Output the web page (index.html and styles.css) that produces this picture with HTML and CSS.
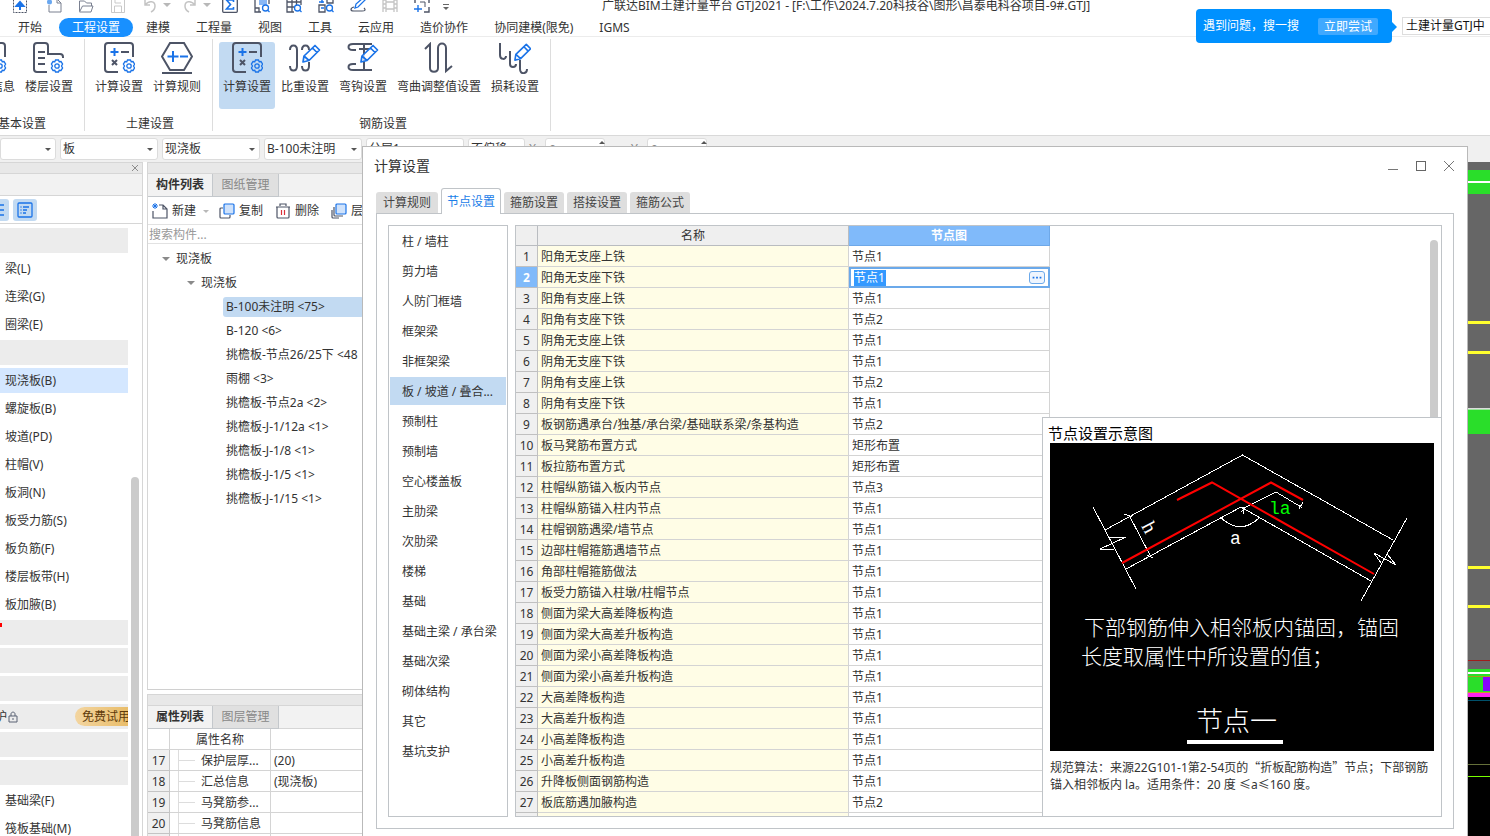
FILE: index.html
```html
<!DOCTYPE html>
<html lang="zh-CN">
<head>
<meta charset="utf-8">
<title>广联达BIM土建计量平台 GTJ2021</title>
<link rel="stylesheet" href="styles.css">
</head>
<body>
<svg class="defs" width="0" height="0" aria-hidden="true">
  <symbol id="gear" viewBox="0 0 14 14"><path d="M5.5 1h3l.7 1.7 1.8-.2 1.6 2.6L11.500 7l1.100 1.900L11 11.500l-1.800-.2L8.500 13h-3l-.7-1.700-1.800.2L1.400 8.900 2.500 7 1.400 5.100 3 2.500l1.800.2z"/><circle cx="7" cy="7" r="2.200"/></symbol>
  <symbol id="calc" viewBox="0 0 32 32"><g fill="none" stroke="#4d5466" stroke-width="2"><path d="M15 30H5a3 3 0 0 1-3-3V4a3 3 0 0 1 3-3h22a3 3 0 0 1 3 3v11"/><path d="M18 10h8M9 18l5 5M14 18l-5 5"/></g><path d="M11.500 6v8M7.500 10h8" stroke="#1a73e8" stroke-width="2"/><use href="#gear" x="19" y="17" width="14" height="14" fill="none" stroke="#1a73e8" stroke-width="1.300"/></symbol>
  <symbol id="pencil" viewBox="0 0 20 20"><path d="M2 18l1-6L14 1.500 18.500 6 8 16.500zM3 12l5 4.500M11.500 4l4.500 4.500" fill="#fff" fill-opacity=".8" stroke="#1a73e8" stroke-width="1.700" stroke-linejoin="round"/></symbol>
</svg>

<header class="titlebar">
  <nav class="quick" aria-label="快速访问">
    <button class="q q-first" aria-label="上传"><svg viewBox="0 0 16 16"><rect x="1.500" y="1.500" width="13" height="14" fill="none" stroke="#4d5466" stroke-dasharray="2 1"/><path d="M8 13V6M4.500 9L8 5l3.500 4z" fill="#1a73e8" stroke="#1a73e8" stroke-width="2"/></svg></button>
    <button class="q" aria-label="新建工程"><svg viewBox="0 0 16 16"><path d="M8 2h3l4 4v9H3V8" fill="none" stroke="#7a8090"/><path d="M11 2v4h4" fill="none" stroke="#7a8090"/><circle cx="3.500" cy="5" r="2.500" fill="#69a7f0"/></svg></button>
    <button class="q" aria-label="打开"><svg viewBox="0 0 16 16"><path d="M1.500 14V4h5l2 2h5v3M1.500 15l3-6H15l-2 6z" fill="none" stroke="#7a8090"/></svg></button>
    <button class="q" aria-label="保存"><svg viewBox="0 0 16 16"><path d="M1.500 2.500h13v13h-13zM4.500 15V9h7v6M5 2v4h6" fill="none" stroke="#c9c9c9"/></svg></button>
    <button class="q" aria-label="撤销"><svg viewBox="0 0 16 16"><path d="M3 3v5h5M3 8c4-5 10-4 10 1 0 3-2 5-4 6" fill="none" stroke="#c4c4c4" stroke-width="1.500"/></svg><i class="caret pale"></i></button>
    <button class="q" aria-label="恢复"><svg viewBox="0 0 16 16"><path d="M13 3v5H8M13 8C9 3 3 4 3 9c0 3 2 5 4 6" fill="none" stroke="#c4c4c4" stroke-width="1.500"/></svg><i class="caret pale"></i></button>
    <button class="q" aria-label="汇总"><svg viewBox="0 0 16 16"><rect x=".7" y="0" width="14.600" height="15.300" rx="1" fill="none" stroke="#4d5466" stroke-width="1.300"/><path d="M11.500 5V3h-7l4 4.500-4 4.500h7v-2" fill="none" stroke="#1a73e8" stroke-width="1.600"/></svg></button>
    <button class="q" aria-label="查看"><svg viewBox="0 0 16 16"><path d="M1 0v15h6M15 0v7M1 11h4v4" fill="none" stroke="#4d5466" stroke-width="1.300"/><path d="M5 3h8v5H5z" fill="#8ab8f5"/><circle cx="11.500" cy="11" r="3" fill="none" stroke="#1a73e8" stroke-width="1.300"/><path d="M13.500 13l2 2" stroke="#1a73e8" stroke-width="1.300"/></svg></button>
    <button class="q" aria-label="报表"><svg viewBox="0 0 16 16"><path d="M1 0v15h7M15 0v8M6 0v15M10.500 0v8M1 5h14M1 10h7" fill="none" stroke="#4d5466" stroke-width="1.300"/><circle cx="11.500" cy="11" r="3" fill="none" stroke="#1a73e8" stroke-width="1.300"/><path d="M13.500 13l2 2" stroke="#1a73e8" stroke-width="1.300"/></svg></button>
    <button class="q" aria-label="查找"><svg viewBox="0 0 16 16"><path d="M1 8h6v7H1zM9 1h6v5H9z" fill="none" stroke="#4d5466" stroke-width="1.300"/><path d="M1 5h5M4 2v4M3 11h3" stroke="#1a73e8" stroke-width="1.500"/><circle cx="11.500" cy="11" r="3" fill="none" stroke="#1a73e8" stroke-width="1.300"/><path d="M13.500 13l2 2" stroke="#1a73e8" stroke-width="1.300"/></svg></button>
    <button class="q" aria-label="编辑"><svg viewBox="0 0 16 16"><path d="M5 11l1-4 7-6 2 2-7 7z" fill="none" stroke="#1a73e8" stroke-width="1.300"/><path d="M4 10c-4 1-4 4 0 4h8c3 0 4-1 2-3" fill="none" stroke="#4d5466" stroke-width="1.200"/></svg></button>
    <button class="q" aria-label="视频"><svg viewBox="0 0 16 16"><path d="M1 0v15M4 0v15M12 0v15M15 0v15M1 3h3M1 7h3M1 11h3M12 3h3M12 7h3M12 11h3M4 5h8M4 12h8" fill="none" stroke="#c4c4c4" stroke-width="1.300"/></svg></button>
    <button class="q" aria-label="框选"><svg viewBox="0 0 16 16"><path d="M1 6V2h4M11 2h4v4M15 10v5h-5" fill="none" stroke="#4d5466" stroke-width="1.400"/><path d="M4 8v7M0 12h8" stroke="#1a73e8" stroke-width="1.400"/><path d="M6 5h5v5" fill="none" stroke="#4d5466"/></svg></button>
    <button class="q q-more" aria-label="更多"><svg viewBox="0 0 6 16"><path d="M0 7.500h6" stroke="#666"/><path d="M0 10h6l-3 3z" fill="#666"/></svg></button>
  </nav>
  <h1 class="app-title">广联达BIM土建计量平台 GTJ2021 - [F:\工作\2024.7.20科技谷\图形\昌泰电科谷项目-9#.GTJ]</h1>
</header>

<nav class="tabs" aria-label="功能区">
  <button class="tab tab-first">开始</button><button class="tab tab-on">工程设置</button><button class="tab">建模</button><button class="tab">工程量</button><button class="tab">视图</button><button class="tab">工具</button><button class="tab">云应用</button><button class="tab">造价协作</button><button class="tab">协同建模(限免)</button><button class="tab">IGMS</button>
</nav>

<div class="help">
  <div class="tip"><span>遇到问题，搜一搜</span><button>立即尝试</button></div>
  <input class="ask" aria-label="搜索帮助" value="土建计量GTJ中">
</div>

<section class="ribbon">
  <div class="group group-cut">
    <div class="cmds">
      <button class="cmd"><svg viewBox="0 0 32 32"><path d="M15 30H5V1h22a3 3 0 0 1 3 3v11" fill="none" stroke="#4d5466" stroke-width="2"/><use href="#gear" x="18" y="17" width="14" height="14" fill="none" stroke="#1a73e8" stroke-width="1.300"/></svg>工程信息</button>
      <button class="cmd"><svg viewBox="0 0 32 32"><g fill="none" stroke="#4d5466" stroke-width="2"><path d="M14 30H4a3 3 0 0 1-3-3V4a3 3 0 0 1 3-3h8a3 3 0 0 1 3 3v8h12a3 3 0 0 1 3 3v1M5 10h7M5 16h7M5 22h7"/></g><use href="#gear" x="17" y="17" width="14" height="14" fill="none" stroke="#1a73e8" stroke-width="1.300"/></svg>楼层设置</button>
    </div>
    <span class="caption">基本设置</span>
  </div>
  <div class="group">
    <div class="cmds">
      <button class="cmd"><svg><use href="#calc"/></svg>计算设置</button>
      <button class="cmd"><svg viewBox="0 0 32 32"><path d="M9 1h14l8 13.500L23 28H9L1 14.500zM1 31h30" fill="none" stroke="#4d5466" stroke-width="2"/><path d="M12 9v11M6.500 14.500h11" stroke="#1a73e8" stroke-width="2"/><path d="M19 14.500h8" stroke="#1a73e8" stroke-width="2"/></svg>计算规则</button>
    </div>
    <span class="caption">土建设置</span>
  </div>
  <div class="group">
    <div class="cmds">
      <button class="cmd cmd-on"><svg><use href="#calc"/></svg>计算设置</button>
      <button class="cmd"><svg viewBox="0 0 32 32"><path d="M1 8C1 2 8 2 8 8v16c0 6-7 6-7 0M13 8c0-6 7-6 7 0M20 20v4c0 6-7 6-7 0" fill="none" stroke="#4d5466" stroke-width="2"/><use href="#pencil" x="12" y="2" width="20" height="20"/></svg>比重设置</button>
      <button class="cmd"><svg viewBox="0 0 32 32"><path d="M25 2H6C0 2 0 8 6 8h3M12 2h13M25 28H6c-6 0-6-6 0-6h3M17 3v24M12 7h10" fill="none" stroke="#4d5466" stroke-width="2"/><use href="#pencil" x="12" y="2" width="20" height="20"/></svg>弯钩设置</button>
      <button class="cmd cmd-wide"><svg viewBox="0 0 32 32"><path d="M2 7l5-5v24c0 5 8 5 8 0V6c0-6 8-6 8 0v23l6-5" fill="none" stroke="#4d5466" stroke-width="2"/></svg>弯曲调整值设置</button>
      <button class="cmd"><svg viewBox="0 0 32 32"><path d="M1 1v12c0 5 6 5 6 1M11 9v13c0 4 6 4 6 0M21 18v9c0 6 7 5 7 0" fill="none" stroke="#4d5466" stroke-width="2"/><use href="#pencil" x="14" y="1" width="19" height="19"/></svg>损耗设置</button>
    </div>
    <span class="caption">钢筋设置</span>
  </div>
</section>

<section class="filters">
  <span class="pick pick-cut"><select aria-label="楼层"><option></option></select></span>
  <span class="pick"><select aria-label="构件大类"><option>板</option></select></span>
  <span class="pick"><select aria-label="构件类型"><option>现浇板</option></select></span>
  <span class="pick"><select aria-label="构件"><option>B-100未注明</option></select></span>
  <span class="pick"><select aria-label="分层"><option>分层1</option></select></span>
  <span class="pick pick-small"><select aria-label="偏移"><option>不偏移</option></select></span>
  <label class="spin">X:<input value="0"></label>
  <label class="spin">Y:<input value="0"></label>
</section>

<main class="work">
  <aside class="modules">
    <div class="grip"><button aria-label="关闭"><svg viewBox="0 0 8 8"><path d="M1 1l6 6M7 1L1 7" stroke="#8c8c8c"/></svg></button></div>
    <div class="blank"></div>
    <div class="views">
      <button class="view view-cut" aria-label="列表"><svg viewBox="0 0 16 16"><path d="M1 3h14M1 8h14M1 13h14" stroke="#1a73e8" stroke-width="1.300"/></svg></button>
      <button class="view" aria-label="分组"><svg viewBox="0 0 16 16"><path d="M2 1h12a1 1 0 0 1 1 1v12a1 1 0 0 1-1 1H2a1 1 0 0 1-1-1V2a1 1 0 0 1 1-1zM6 5h6M6 8h4M6 11h3M3.500 5h1M3.500 8h1M3.500 11h1" fill="none" stroke="#1a73e8" stroke-width="1.300"/></svg></button>
    </div>
    <div class="module-body">
      <ul class="module-list">
        <li class="fold"></li><li>梁(L)</li><li>连梁(G)</li><li>圈梁(E)</li><li class="fold"></li><li class="picked">现浇板(B)</li><li>螺旋板(B)</li><li>坡道(PD)</li><li>柱帽(V)</li><li>板洞(N)</li><li>板受力筋(S)</li><li>板负筋(F)</li><li>楼层板带(H)</li><li>板加腋(B)</li><li class="fold"><i class="dot"></i></li><li class="fold"></li><li class="fold"></li>
        <li class="fold trial"><span class="pit">护</span><svg viewBox="0 0 10 12"><path d="M1 5h8v6H1zM3 5V3c0-2.500 4-2.500 4 0v2M5 7v2" fill="none" stroke="#5b6375"/></svg><button>免费试用</button></li>
        <li class="fold"></li><li class="fold"></li><li>基础梁(F)</li><li>筏板基础(M)</li>
      </ul>
      <div class="thumb"></div>
    </div>
  </aside>

  <aside class="side">
    <section class="panel panel-tree">
      <div class="grip"></div>
      <div class="ptabs"><button class="on">构件列表</button><button>图纸管理</button></div>
      <div class="tools">
        <button><svg viewBox="0 0 16 16"><path d="M7 2h4l4 4v9H1V8M11 2v4h4" fill="none" stroke="#4d5466" stroke-width="1.200"/><path d="M1 1l4 4M5 1L1 5M3 0v6M0 3h6" stroke="#1a73e8"/></svg>新建<i class="caret pale"></i></button>
        <button><svg viewBox="0 0 16 16"><path d="M4 5H2a1 1 0 0 0-1 1v8a1 1 0 0 0 1 1h8a1 1 0 0 0 1-1v-2" fill="none" stroke="#4d5466" stroke-width="1.200"/><rect x="5" y="1" width="10" height="10" rx="1" fill="#cfe2fb" stroke="#1a73e8" stroke-width="1.200"/></svg>复制</button>
        <button><svg viewBox="0 0 16 16"><path d="M2 4v10a1 1 0 0 0 1 1h10a1 1 0 0 0 1-1V4M1 4h14M5 3V1h6v2" fill="none" stroke="#4d5466" stroke-width="1.200"/><path d="M6.500 7v5M9.500 7v5" stroke="#d9303a" stroke-width="1.200"/></svg>删除</button>
        <button><svg viewBox="0 0 16 16"><path d="M3 4v8a1 1 0 0 0 1 1h8M1 7v7a1 1 0 0 0 1 1h6" fill="none" stroke="#4d5466" stroke-width="1.200"/><rect x="5" y="1" width="10" height="10" rx="1" fill="#cfe2fb" stroke="#1a73e8" stroke-width="1.200"/></svg>层</button>
      </div>
      <input class="find" aria-label="搜索构件" placeholder="搜索构件...">
      <ul class="tree">
        <li class="lv1"><i class="caret"></i>现浇板</li>
        <li class="lv2"><i class="caret"></i>现浇板</li>
        <li><span class="picked">B-100未注明 &lt;75&gt;</span></li>
        <li><span>B-120 &lt;6&gt;</span></li>
        <li><span>挑檐板-节点26/25下 &lt;48</span></li>
        <li><span>雨棚 &lt;3&gt;</span></li>
        <li><span>挑檐板-节点2a &lt;2&gt;</span></li>
        <li><span>挑檐板-J-1/12a &lt;1&gt;</span></li>
        <li><span>挑檐板-J-1/8 &lt;1&gt;</span></li>
        <li><span>挑檐板-J-1/5 &lt;1&gt;</span></li>
        <li><span>挑檐板-J-1/15 &lt;1&gt;</span></li>
      </ul>
    </section>
    <section class="panel panel-props">
      <div class="grip"></div>
      <div class="ptabs"><button class="on">属性列表</button><button>图层管理</button></div>
      <table class="props">
        <tr><th></th><th>属性名称</th><th></th></tr>
        <tr><td>17</td><td>保护层厚...</td><td>(20)</td></tr>
        <tr><td>18</td><td>汇总信息</td><td>(现浇板)</td></tr>
        <tr><td>19</td><td>马凳筋参...</td><td></td></tr>
        <tr><td>20</td><td>马凳筋信息</td><td></td></tr>
        <tr><td></td><td></td><td></td></tr>
      </table>
    </section>
  </aside>

  <div class="canvas">
    <svg width="100%" height="100%" shape-rendering="crispEdges" aria-label="绘图区">
      <rect width="100%" height="100%" fill="#666"/>
      <rect y="8" width="100%" height="24" fill="#2ade2a"/><rect y="19" width="100%" height="2" fill="#fff"/>
      <g fill="#ffff2e"><rect y="159" width="100%" height="3"/><rect y="189" width="100%" height="3"/><rect y="404" width="100%" height="3"/><rect y="443" width="100%" height="3"/></g>
      <rect y="246" width="100%" height="1" fill="#ddd"/><rect y="248" width="100%" height="24" fill="#2ade2a"/><rect y="247" width="100%" height="1" fill="#9be69b"/>
      <rect y="498" width="100%" height="1" fill="#a11c1c"/>
      <rect y="507" width="100%" height="24" fill="#2ade2a"/><rect y="510" width="100%" height="2" fill="#fff"/>
      <rect y="514" width="100%" height="1" fill="#a89a1c"/><rect y="530" width="100%" height="1" fill="#c9a020"/>
      <svg x="100%" overflow="visible"><rect x="-7" y="515" width="7" height="14" fill="#8800ff"/></svg>
      <rect y="531" width="100%" height="4" fill="#ff22ee"/>
      <rect y="535" width="100%" height="100%" fill="#000"/>
      <rect y="538" width="100%" height="1" fill="#00506a"/><rect y="602" width="100%" height="1" fill="#66703a"/><rect y="614" width="100%" height="1" fill="#78ff00"/>
    </svg>
  </div>
</main>

<section class="dialog" role="dialog" aria-label="计算设置">
  <div class="dlg-head">
    <h2>计算设置</h2>
    <button aria-label="最小化"><svg viewBox="0 0 12 12"><path d="M1 9.500h10" stroke="#777"/></svg></button>
    <button aria-label="最大化"><svg viewBox="0 0 12 12"><rect x="1.500" y="1.500" width="9" height="9" fill="none" stroke="#666"/></svg></button>
    <button aria-label="关闭窗口"><svg viewBox="0 0 12 12"><path d="M1 1l10 10M11 1L1 11" stroke="#777"/></svg></button>
  </div>
  <div class="dlg-tabs"><button class="wide">计算规则</button><button class="on">节点设置</button><button>箍筋设置</button><button>搭接设置</button><button>箍筋公式</button></div>
  <div class="dlg-body">
    <ul class="kinds">
      <li>柱 / 墙柱</li><li>剪力墙</li><li>人防门框墙</li><li>框架梁</li><li>非框架梁</li><li class="picked">板 / 坡道 / 叠合...</li><li>预制柱</li><li>预制墙</li><li>空心楼盖板</li><li>主肋梁</li><li>次肋梁</li><li>楼梯</li><li>基础</li><li>基础主梁 / 承台梁</li><li>基础次梁</li><li>砌体结构</li><li>其它</li><li>基坑支护</li>
    </ul>
    <div class="sheet">
      <table class="nodes">
        <tr><th></th><th>名称</th><th class="on">节点图</th></tr>
        <tr><td>1</td><td>阳角无支座上铁</td><td>节点1</td></tr>
        <tr class="row-on"><td>2</td><td>阳角无支座下铁</td><td><div class="edit"><input aria-label="节点图" value="节点1"><button aria-label="选择节点"><svg viewBox="0 0 16 12"><path d="M3 6h2M7 6h2M11 6h2" stroke="#1a73e8" stroke-width="2"/></svg></button></div></td></tr>
        <tr><td>3</td><td>阳角有支座上铁</td><td>节点1</td></tr>
        <tr><td>4</td><td>阳角有支座下铁</td><td>节点2</td></tr>
        <tr><td>5</td><td>阴角无支座上铁</td><td>节点1</td></tr>
        <tr><td>6</td><td>阴角无支座下铁</td><td>节点1</td></tr>
        <tr><td>7</td><td>阴角有支座上铁</td><td>节点2</td></tr>
        <tr><td>8</td><td>阴角有支座下铁</td><td>节点1</td></tr>
        <tr><td>9</td><td>板钢筋遇承台/独基/承台梁/基础联系梁/条基构造</td><td>节点2</td></tr>
        <tr><td>10</td><td>板马凳筋布置方式</td><td>矩形布置</td></tr>
        <tr><td>11</td><td>板拉筋布置方式</td><td>矩形布置</td></tr>
        <tr><td>12</td><td>柱帽纵筋锚入板内节点</td><td>节点3</td></tr>
        <tr><td>13</td><td>柱帽纵筋锚入柱内节点</td><td>节点1</td></tr>
        <tr><td>14</td><td>柱帽钢筋遇梁/墙节点</td><td>节点1</td></tr>
        <tr><td>15</td><td>边部柱帽箍筋遇墙节点</td><td>节点1</td></tr>
        <tr><td>16</td><td>角部柱帽箍筋做法</td><td>节点1</td></tr>
        <tr><td>17</td><td>板受力筋锚入柱墩/柱帽节点</td><td>节点1</td></tr>
        <tr><td>18</td><td>侧面为梁大高差降板构造</td><td>节点1</td></tr>
        <tr><td>19</td><td>侧面为梁大高差升板构造</td><td>节点1</td></tr>
        <tr><td>20</td><td>侧面为梁小高差降板构造</td><td>节点1</td></tr>
        <tr><td>21</td><td>侧面为梁小高差升板构造</td><td>节点1</td></tr>
        <tr><td>22</td><td>大高差降板构造</td><td>节点1</td></tr>
        <tr><td>23</td><td>大高差升板构造</td><td>节点1</td></tr>
        <tr><td>24</td><td>小高差降板构造</td><td>节点1</td></tr>
        <tr><td>25</td><td>小高差升板构造</td><td>节点1</td></tr>
        <tr><td>26</td><td>升降板侧面钢筋构造</td><td>节点1</td></tr>
        <tr><td>27</td><td>板底筋遇加腋构造</td><td>节点2</td></tr>
        <tr><td></td><td></td><td></td></tr>
      </table>
      <div class="thumb"></div>
      <figure class="preview">
        <h3>节点设置示意图</h3>
        <svg class="diagram" viewBox="0 0 384 308" aria-label="节点一">
          <rect width="384" height="308" fill="#000"/>
          <g fill="none" stroke="#fff" shape-rendering="crispEdges">
            <path d="M55 87L192.500 12 343 97M76 126L191 64 321 138"/>
            <path d="M43 64L86 146M58 95L76 94 50 106H64"/>
            <path d="M357 75L311 158M331 120L324 110 346 122 337 111"/>
            <path d="M79 72L101 114M74 71L82 74M97 112L103 115"/>
            <path d="M170 74Q190 93 209 75"/>
            <path d="M192 66L226 49 251 64M247 61L252 65M249 66L253 59M193 71V64M191 69L196 64"/>
          </g>
          <g fill="none" stroke="#f00" stroke-width="2" shape-rendering="geometricPrecision">
            <path d="M127 57L162 39.500 324 131M72 120L221 39.500 253 57"/>
          </g>
          <g class="marks">
            <text x="219" y="71">la</text>
            <text x="180" y="101">a</text>
            <text class="depth" transform="translate(91 83) rotate(62)">h</text>
          </g>
          <g class="note"><text x="34" y="192">下部钢筋伸入相邻板内锚固，锚固</text><text x="31" y="221">长度取属性中所设置的值；</text></g>
          <text class="name" x="146" y="288">节点一</text>
          <rect x="137" y="297" width="96" height="4" fill="#fff"/>
        </svg>
        <figcaption>规范算法：来源22G101-1第2-54页的<q>折板配筋构造</q>节点；下部钢筋锚入相邻板内 la。适用条件：20 度 ≤a≤160 度。</figcaption>
      </figure>
    </div>
  </div>
</section>
</body>
</html>
```
FILE: styles.css
```css
* { box-sizing: border-box; }

body {
  margin: 0;
  height: 100vh;
  overflow: hidden;
  position: relative;
  display: flex;
  flex-direction: column;
  background: #fff;
  color: #333;
  font: 12px/18px "Noto Sans", "Noto Sans CJK SC", sans-serif;
}

button, input, select {
  margin: 0;
  padding: 0;
  border: 0;
  background: none;
  color: inherit;
  font: inherit;
}

ul { margin: 0; padding: 0; list-style: none; }
h1, h2, h3, figure { margin: 0; font-weight: 400; }
svg { display: block; flex: none; }
.defs { position: absolute; }

.caret {
  flex: none;
  width: 0;
  height: 0;
  border: 4px solid transparent;
  border-bottom-width: 0;
  border-top-color: #8a8a8a;
}
.pale { border-top-color: #b8b8b8; }

/* title bar */
.titlebar { flex: none; display: flex; height: 18px; overflow: hidden; }
.quick { flex: none; display: flex; align-items: flex-end; gap: 16px; padding: 0 0 5px 12px; width: 602px; }
.q { display: flex; align-items: center; }
.q svg { width: 16px; height: 16px; }
.q .caret { margin: 0 -5px 0 5px; }
.q-first { margin-right: 2px; }
.q.q-more svg { width: 6px; margin-left: -3px; }
.app-title { font-size: 12px; line-height: 12px; white-space: nowrap; }

/* ribbon tabs */
.tabs { flex: none; display: flex; height: 19px; padding-left: 5px; border-bottom: 1px solid #ececec; }
.tab { height: 19px; padding: 0 13px; border-radius: 10px; line-height: 20px; white-space: nowrap; }
.tab-first { margin-right: 4px; }
.tab-on { background: #1890ff; color: #fff; }

.help { position: absolute; top: 9px; right: 0; display: flex; align-items: center; gap: 10px; }
.tip {
  position: relative;
  display: flex;
  align-items: center;
  gap: 19px;
  height: 34px;
  padding: 0 14px 0 7px;
  border-radius: 4px;
  background: #0091ff;
  color: #fff;
}
.tip::after {
  content: "";
  position: absolute;
  left: 100%;
  top: 13px;
  border: 5px solid transparent;
  border-left-color: #0091ff;
  border-right-width: 0;
}
.tip button { height: 17px; padding: 0 6px; border-radius: 2px; background: #40a9ff; line-height: 17px; }
.ask { width: 88px; height: 18px; padding-left: 3px; border: 1px solid #ddd; border-right: 0; color: #111; }

/* ribbon */
.ribbon { flex: none; display: flex; height: 98px; padding: 2px 0 4px; background: #fff; }
.group {
  flex: none;
  display: flex;
  flex-direction: column;
  align-items: center;
  justify-content: space-between;
  padding: 3px 7px 0 6px;
  border-right: 1px solid #ddd;
}
.group-cut { margin-left: -43px; }
.cmds { display: flex; gap: 2px; }
.cmd {
  display: flex;
  flex-direction: column;
  align-items: center;
  gap: 4px;
  width: 56px;
  height: 67px;
  border-radius: 3px;
  line-height: 18px;
  white-space: nowrap;
}
.cmd svg { width: 32px; height: 32px; }
.cmd-wide { width: 92px; }
.cmd-on { background: #c2daf2; }
.caption { padding-left: 4px; line-height: 14px; }

/* filters */
.filters {
  flex: none;
  display: flex;
  align-items: center;
  gap: 4px;
  height: 27px;
  border-top: 1px solid #d9d9d9;
  background: #f0f0f0;
}
.pick { position: relative; flex: none; width: 98px; }
.pick::after {
  content: "";
  position: absolute;
  right: 5px;
  top: 10px;
  border: 3px solid transparent;
  border-top-color: #555;
  border-bottom-width: 0;
}
.pick select {
  width: 100%;
  height: 22px;
  padding: 0 2px;
  border: 1px solid #dcdcdc;
  border-radius: 3px;
  background: #fff;
  appearance: none;
}
.pick-cut { width: 56px; }
.pick-small { width: 57px; }
.spin { position: relative; display: flex; align-items: center; gap: 6px; width: 98px; color: #888; }
.spin input { width: 60px; height: 22px; padding: 0 3px; border: 1px solid #dcdcdc; border-radius: 3px; background: #fff; }
.spin::after {
  content: "";
  position: absolute;
  left: 70px;
  top: 3px;
  border: 3px solid transparent;
  border-bottom-color: #555;
  border-top-width: 0;
}

/* workspace */
.work { flex: 1; min-height: 0; display: flex; }
.grip { flex: none; height: 12px; border-top: 1px solid #d6d6d6; border-bottom: 1px solid #d6d6d6; background: #e8e8e8; }
.modules { flex: none; display: flex; flex-direction: column; width: 143px; border-right: 1px solid #d6d6d6; }
.modules .grip { display: flex; justify-content: flex-end; align-items: center; padding-right: 3px; }
.grip svg { width: 8px; height: 8px; }
.blank { flex: none; height: 22px; border-bottom: 1px solid #d6d6d6; background: #f2f2f2; }
.views { flex: none; display: flex; align-items: center; gap: 4px; height: 28px; border-bottom: 1px solid #d6d6d6; }
.view { display: grid; place-items: center; width: 24px; height: 22px; border-radius: 3px; background: #c2daf2; }
.view svg { width: 16px; height: 16px; }
.view-cut { margin-left: -15px; }
.module-body { flex: 1; min-height: 0; display: flex; justify-content: space-between; align-items: flex-end; padding: 4px 3px 0 0; }
.module-list { align-self: stretch; display: flex; flex-direction: column; gap: 3px; width: 128px; overflow: hidden; }
.module-list li { flex: none; height: 25px; padding-left: 5px; line-height: 25px; white-space: nowrap; }
.module-list .fold { padding-left: 0; background: #ececec; }
.module-list .picked { background: #d4e7ff; }
.dot { display: block; width: 2px; height: 4px; margin-top: 3px; background: #f00; }
.module-list .fold:has(.dot) { display: flex; }
.module-list .trial { display: flex; align-items: center; }
.pit { margin-left: -5px; }
.trial svg { width: 10px; height: 12px; margin-left: 1px; }
.trial button { flex: none; margin-left: auto; width: 53px; height: 19px; padding-left: 7px; border-radius: 10px 0 0 10px; background: linear-gradient(90deg, #f3d5a0, #e9bd6a); color: #5e3a0a; line-height: 19px; text-align: left; white-space: nowrap; overflow: hidden; }
.thumb { width: 8px; border-radius: 4px 4px 0 0; background: #cbcbcb; }
.module-body .thumb { height: 59%; }

.side { flex: none; display: flex; flex-direction: column; gap: 4px; width: 217px; margin-left: 4px; overflow: hidden; }
.panel { display: flex; flex-direction: column; border-left: 1px solid #d6d6d6; }
.panel-tree { flex: 1; border-bottom: 1px solid #d0d0d0; }
.panel-props { flex: none; height: 142px; overflow: hidden; }
.ptabs { flex: none; display: flex; height: 23px; border-bottom: 1px solid #d6d6d6; background: #f2f2f2; }
.ptabs button { width: 66px; height: 23px; border-right: 1px solid #c4c8cc; border-bottom: 1px solid #c4c8cc; background: #e0e0e0; color: #888; line-height: 22px; }
.ptabs .on { width: 65px; background: #f2f2f2; color: #333; font-weight: 700; }
.tools { flex: none; display: flex; align-items: center; gap: 12px; height: 28px; padding: 1px 0 0 4px; border-bottom: 1px solid #e2e2e2; }
.tools button { display: flex; align-items: center; gap: 4px; white-space: nowrap; }
.tools svg { width: 16px; height: 16px; }
.tools .caret { margin: 0 -2px 0 3px; border-width: 3px 3px 0; }
.find { flex: none; height: 19px; padding-left: 1px; border-bottom: 1px solid #e2e2e2; }
.find::placeholder { color: #999; opacity: 1; }
.tree { padding-top: 3px; }
.tree li { display: flex; align-items: center; height: 24px; padding-left: 75px; white-space: nowrap; }
.tree .lv1 { gap: 6px; padding-left: 14px; }
.tree .lv2 { gap: 6px; padding-left: 39px; }
.tree span { flex: 1; padding-left: 3px; border-radius: 3px; line-height: 20px; }
.tree .picked { background: #c2daf2; }

table { border-collapse: separate; border-spacing: 0; table-layout: fixed; }
.props { width: 100%; }
.props th, .props td { height: 21px; padding: 2px 0 0 3px; border: 0 solid #d4d4d4; border-width: 0 1px 1px 0; font-weight: 400; line-height: 18px; white-space: nowrap; }
.props th:nth-child(1) { width: 22px; }
.props th:nth-child(2) { width: 101px; padding-left: 0; }
.props td:nth-child(1) { padding-left: 0; background: #f0f0f0; border-color: #c4c4c4; text-align: center; }
.props td:nth-child(2) {
  padding-left: 31px;
  background: linear-gradient(#ddd, #ddd) 8px 0 / 1px 100% no-repeat, linear-gradient(#ddd, #ddd) 9px 50% / 16px 1px no-repeat;
}

.canvas { flex: 1; min-width: 0; }

/* dialog */
.dialog {
  position: absolute;
  inset: 146px 22px 0 362px;
  display: flex;
  flex-direction: column;
  padding: 0 13px 7px;
  border: 1px solid #b9b9b9;
  border-bottom: 0;
  background: #fff;
}
.dlg-head { flex: none; display: flex; align-items: center; gap: 16px; height: 37px; }
.dlg-head h2 { flex: 1; margin-left: -2px; font-size: 14px; line-height: 20px; }
.dlg-head svg { width: 12px; height: 12px; }
.dlg-head button:last-child { margin-right: -1px; }
.dlg-tabs { position: relative; flex: none; display: flex; align-items: flex-end; gap: 3px; height: 26px; margin: 4px 0 -1px; }
.dlg-tabs button { width: 60px; height: 21px; margin-bottom: 1px; border-radius: 3px 3px 0 0; background: #dedede; color: #444; line-height: 21px; }
.dlg-tabs .wide { width: 62px; }
.dlg-tabs .on { height: 26px; margin-bottom: 0; border: 1px solid #c0c4c8; border-bottom: 0; background: #fff; color: #1a7de8; }
.dlg-body { flex: 1; min-height: 0; display: flex; gap: 7px; padding: 11px; border: 1px solid #c0c4c8; }
.kinds { flex: none; display: flex; flex-direction: column; gap: 2px; width: 120px; padding: 1px; border: 1px solid #c0c4c8; overflow: hidden; }
.kinds li { flex: none; height: 28px; padding-left: 12px; line-height: 30px; white-space: nowrap; }
.kinds .picked { background: #c2daf2; }
.sheet { position: relative; flex: 1; min-width: 0; display: flex; justify-content: space-between; padding-right: 3px; border: 1px solid #c0c4c8; overflow: hidden; }
.sheet > .thumb { height: 100%; margin-top: 14px; }
.nodes { flex: none; width: 534px; }
.nodes th, .nodes td { height: 21px; padding: 2px 3px 0; border: 0 solid #d4d4d4; border-width: 0 1px 1px 0; font-weight: 400; line-height: 18px; white-space: nowrap; }
.nodes th { height: 20px; padding-top: 1px; border-color: #b9bcc0; background: #efefef; }
.nodes th:nth-child(1) { width: 22px; }
.nodes th:nth-child(2) { width: 311px; }
.nodes .on { border-color: #6ea8e8; background: #80bafa; color: #fff; font-weight: 700; }
.nodes td:nth-child(1) { padding: 2px 0 0; border-color: #c0c0c0; background: #f0f0f0; text-align: center; }
.nodes td:nth-child(2) { background: #fffde6; }
.nodes .row-on td:nth-child(1) { background: #80bafa; color: #fff; font-weight: 700; }
.nodes .row-on td:nth-child(3) { padding: 0; border: 0; }
.edit { display: flex; align-items: center; justify-content: space-between; height: 21px; padding: 0 3px; border: 2px solid #6ba9ea; background: #fff; }
.edit input { width: 32px; height: 16px; background: #3399ff; color: #fff; }
.edit button { width: 16px; height: 13px; border: 1px solid #6ba9ea; border-radius: 3px; background: #eef5fe; }
.edit svg { width: 14px; height: 11px; }

.preview { position: absolute; right: 0; bottom: 0; width: 399px; height: 399px; padding: 5px 7px 0; border: 1px solid #c0c4c8; border-width: 1px 0 0 1px; background: #fff; }
.preview h3 { margin-left: -2px; color: #000; font-size: 15px; line-height: 20px; }
.diagram { width: 384px; height: 308px; }
.diagram text { font-family: "Noto Sans CJK SC", sans-serif; font-weight: 300; fill: #fff; }
.diagram .marks text { font-family: "Liberation Mono", monospace; font-size: 18px; }
.diagram .marks text:first-child { fill: #0f0; }
.diagram .marks .depth { font-family: "Liberation Serif", serif; font-size: 20px; }
.diagram .note text { font-size: 21px; }
.diagram .name { font-size: 27px; }
.preview figcaption { margin-top: 7px; line-height: 17px; }
.preview q { font-family: "Noto Sans CJK SC", sans-serif; quotes: "“" "”"; }
```
